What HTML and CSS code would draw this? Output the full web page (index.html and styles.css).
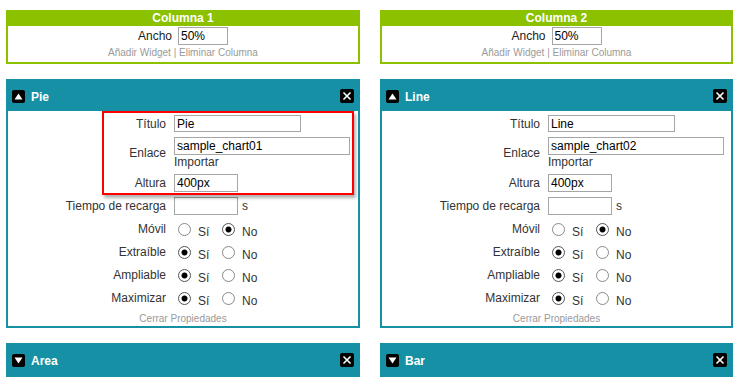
FILE: index.html
```html
<!DOCTYPE html>
<html lang="es">
<head>
<meta charset="utf-8">
<title>Columnas</title>
<link rel="stylesheet" href="styles.css">
</head>
<body>
<div class="page">
  <div class="col">
    <div class="colpanel">
      <div class="colhead">Columna 1</div>
      <div class="colbody">
        <div class="ancho"><span>Ancho</span><input class="in in-ancho" type="text" value="50%"></div>
        <div class="links">Añadir Widget | Eliminar Columna</div>
      </div>
    </div>

    <div class="widget">
      <div class="whead">
        <svg class="ico" width="13" height="13" viewBox="0 0 13 13"><rect x="0" y="0" width="13" height="13" rx="2" fill="#000"/><path d="M2.5 9.5 L6.5 3.5 L10.5 9.5 Z" fill="#fff"/></svg>
        <span class="wtitle">Pie</span>
        <svg class="ico close" width="14" height="14" viewBox="0 0 14 14"><rect x="0" y="0" width="14" height="14" rx="2" fill="#000"/><path d="M3.5 3.5 L10.5 10.5 M10.5 3.5 L3.5 10.5" stroke="#fff" stroke-width="1.6"/></svg>
      </div>
      <div class="wbody">
        <div class="form">
          <label class="lbl">Título</label>
          <div class="cell"><input class="in in-titulo" type="text" value="Pie"></div>
          <label class="lbl">Enlace</label>
          <div class="cell"><input class="in in-enlace" type="text" value="sample_chart01"><div class="importar">Importar</div></div>
          <label class="lbl">Altura</label>
          <div class="cell"><input class="in in-short" type="text" value="400px"></div>
          <label class="lbl">Tiempo de recarga</label>
          <div class="cell"><input class="in in-short" type="text" value=""><span class="unit">s</span></div>
          <label class="lbl">Móvil</label>
          <div class="cell opts"><input class="rd" type="radio" name="m1"><span class="opt">Sí</span><input class="rd" type="radio" name="m1" checked><span class="opt">No</span></div>
          <label class="lbl">Extraíble</label>
          <div class="cell opts"><input class="rd" type="radio" name="e1" checked><span class="opt">Sí</span><input class="rd" type="radio" name="e1"><span class="opt">No</span></div>
          <label class="lbl">Ampliable</label>
          <div class="cell opts"><input class="rd" type="radio" name="a1" checked><span class="opt">Sí</span><input class="rd" type="radio" name="a1"><span class="opt">No</span></div>
          <label class="lbl">Maximizar</label>
          <div class="cell opts"><input class="rd" type="radio" name="x1" checked><span class="opt">Sí</span><input class="rd" type="radio" name="x1"><span class="opt">No</span></div>
        </div>
        <div class="cerrar">Cerrar Propiedades</div>
        <div class="highlight"></div>
      </div>
    </div>

    <div class="widget">
      <div class="whead">
        <svg class="ico" width="13" height="13" viewBox="0 0 13 13"><rect x="0" y="0" width="13" height="13" rx="2" fill="#000"/><path d="M2.5 3.5 L6.5 9.5 L10.5 3.5 Z" fill="#fff"/></svg>
        <span class="wtitle">Area</span>
        <svg class="ico close" width="14" height="14" viewBox="0 0 14 14"><rect x="0" y="0" width="14" height="14" rx="2" fill="#000"/><path d="M3.5 3.5 L10.5 10.5 M10.5 3.5 L3.5 10.5" stroke="#fff" stroke-width="1.6"/></svg>
      </div>
      <div class="wbody collapsed"></div>
    </div>
  </div>

  <div class="col">
    <div class="colpanel">
      <div class="colhead">Columna 2</div>
      <div class="colbody">
        <div class="ancho"><span>Ancho</span><input class="in in-ancho" type="text" value="50%"></div>
        <div class="links">Añadir Widget | Eliminar Columna</div>
      </div>
    </div>

    <div class="widget">
      <div class="whead">
        <svg class="ico" width="13" height="13" viewBox="0 0 13 13"><rect x="0" y="0" width="13" height="13" rx="2" fill="#000"/><path d="M2.5 9.5 L6.5 3.5 L10.5 9.5 Z" fill="#fff"/></svg>
        <span class="wtitle">Line</span>
        <svg class="ico close" width="14" height="14" viewBox="0 0 14 14"><rect x="0" y="0" width="14" height="14" rx="2" fill="#000"/><path d="M3.5 3.5 L10.5 10.5 M10.5 3.5 L3.5 10.5" stroke="#fff" stroke-width="1.6"/></svg>
      </div>
      <div class="wbody">
        <div class="form">
          <label class="lbl">Título</label>
          <div class="cell"><input class="in in-titulo" type="text" value="Line"></div>
          <label class="lbl">Enlace</label>
          <div class="cell"><input class="in in-enlace" type="text" value="sample_chart02"><div class="importar">Importar</div></div>
          <label class="lbl">Altura</label>
          <div class="cell"><input class="in in-short" type="text" value="400px"></div>
          <label class="lbl">Tiempo de recarga</label>
          <div class="cell"><input class="in in-short" type="text" value=""><span class="unit">s</span></div>
          <label class="lbl">Móvil</label>
          <div class="cell opts"><input class="rd" type="radio" name="m2"><span class="opt">Sí</span><input class="rd" type="radio" name="m2" checked><span class="opt">No</span></div>
          <label class="lbl">Extraíble</label>
          <div class="cell opts"><input class="rd" type="radio" name="e2" checked><span class="opt">Sí</span><input class="rd" type="radio" name="e2"><span class="opt">No</span></div>
          <label class="lbl">Ampliable</label>
          <div class="cell opts"><input class="rd" type="radio" name="a2" checked><span class="opt">Sí</span><input class="rd" type="radio" name="a2"><span class="opt">No</span></div>
          <label class="lbl">Maximizar</label>
          <div class="cell opts"><input class="rd" type="radio" name="x2" checked><span class="opt">Sí</span><input class="rd" type="radio" name="x2"><span class="opt">No</span></div>
        </div>
        <div class="cerrar">Cerrar Propiedades</div>
      </div>
    </div>

    <div class="widget">
      <div class="whead">
        <svg class="ico" width="13" height="13" viewBox="0 0 13 13"><rect x="0" y="0" width="13" height="13" rx="2" fill="#000"/><path d="M2.5 3.5 L6.5 9.5 L10.5 3.5 Z" fill="#fff"/></svg>
        <span class="wtitle">Bar</span>
        <svg class="ico close" width="14" height="14" viewBox="0 0 14 14"><rect x="0" y="0" width="14" height="14" rx="2" fill="#000"/><path d="M3.5 3.5 L10.5 10.5 M10.5 3.5 L3.5 10.5" stroke="#fff" stroke-width="1.6"/></svg>
      </div>
      <div class="wbody collapsed"></div>
    </div>
  </div>
</div>
</body>
</html>
```

FILE: styles.css
```css
html, body {
  margin: 0;
  padding: 0;
  background: #fff;
}
body {
  font-family: "Liberation Sans", Arial, sans-serif;
  font-size: 12px;
  color: #333;
}
.page {
  display: grid;
  grid-template-columns: 354px 353px;
  column-gap: 20px;
  padding: 10px 0 0 6px;
}
.col {
  display: flex;
  flex-direction: column;
  gap: 15px;
}
.colpanel {
  border: 2px solid #8cc100;
  border-top: 0;
}
.colhead {
  background: #8cc100;
  color: #fff;
  font-weight: bold;
  text-align: center;
  height: 16px;
  line-height: 17px;
}
.colbody {
  padding: 1px 0 2px;
}
.ancho {
  display: flex;
  justify-content: center;
  align-items: center;
  gap: 6px;
  height: 18px;
  color: #222;
}
.links {
  text-align: center;
  font-size: 10px;
  line-height: 15px;
  color: #9a9a9a;
}
.in {
  box-sizing: border-box;
  height: 18px;
  border: 1px solid #a6a6a6;
  padding: 0 2px;
  margin: 0;
  font-family: "Liberation Sans", Arial, sans-serif;
  font-size: 12px;
  color: #000;
  background: #fff;
  outline: none;
}
.in-ancho { width: 50px; }
.in-titulo { width: 127px; height: 17px; }
.in-enlace { width: 176px; display: block; }
.in-short { width: 64px; }

.widget {
  display: flex;
  flex-direction: column;
}
.whead {
  height: 32px;
  box-sizing: border-box;
  background: #1590a5;
  display: flex;
  align-items: flex-start;
  padding: 11px 6px 0;
}
.ico { display: block; flex: none; }
.wtitle {
  color: #fff;
  font-weight: bold;
  font-size: 12px;
  line-height: 14px;
  margin-left: 6px;
}
.close { margin-left: auto; margin-top: -1px; }
.wbody {
  position: relative;
  border: 2px solid #1590a5;
  border-top: 0;
  padding: 4px 0 1px;
}
.wbody.collapsed {
  padding: 0;
}
.form {
  display: grid;
  grid-template-columns: 158px 1fr;
  column-gap: 8px;
  row-gap: 5px;
}
.lbl {
  text-align: right;
  align-self: center;
  color: #333;
  line-height: 14px;
}
.cell {
  display: flex;
  flex-direction: column;
  align-items: flex-start;
}
.cell:has(.unit) {
  flex-direction: row;
  align-items: center;
}
.importar {
  line-height: 14px;
  color: #333;
}
.unit {
  margin-left: 4px;
}
.opts {
  flex-direction: row;
  align-items: center;
  height: 18px;
}
.rd {
  appearance: none;
  -webkit-appearance: none;
  box-sizing: border-box;
  width: 13px;
  height: 13px;
  margin: 1px 0 0 4px;
  border: 1px solid #8a8a8a;
  border-radius: 50%;
  background: #fff;
  flex: none;
}
.rd:checked {
  border-color: #555;
  background: radial-gradient(circle, #000 0, #000 2.6px, #fff 3.4px);
}
.opt {
  margin-left: 7px;
  width: 16px;
  padding-top: 5px;
  line-height: 14px;
}
.opt + .rd { margin-left: 8px; }
.cerrar {
  text-align: center;
  font-size: 10px;
  color: #9a9a9a;
  line-height: 12px;
  margin-top: 6px;
}
.highlight {
  position: absolute;
  left: 94px;
  top: 0;
  width: 252px;
  height: 84px;
  box-sizing: border-box;
  border: 2px solid #ff0000;
  box-shadow: 2px 3px 3px rgba(0, 0, 0, 0.3);
  pointer-events: none;
}
```
